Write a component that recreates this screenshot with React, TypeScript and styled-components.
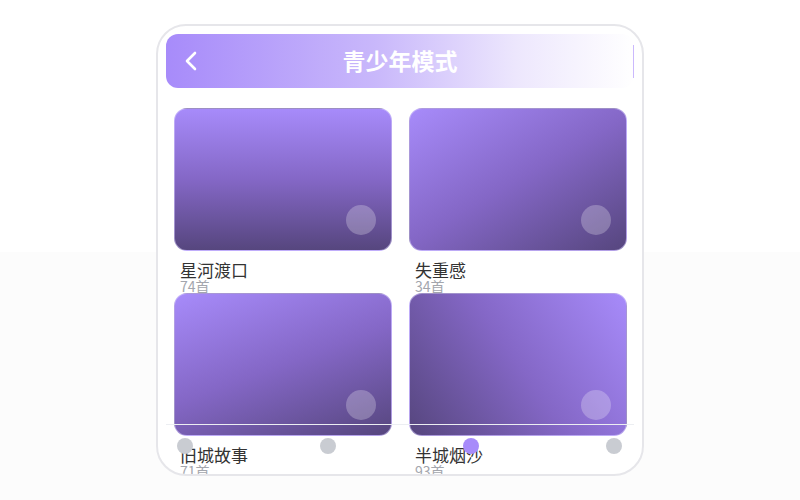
import styled, { createGlobalStyle } from 'styled-components';

const GlobalStyle = createGlobalStyle`
  html, body {
    margin: 0;
    padding: 0;
  }
  body {
    background: linear-gradient(#ffffff 0 252px, #fcfcfc 252px);
    font-family: "Noto Sans CJK SC", "Noto Sans", sans-serif;
  }
`;

const Page = styled.div`
  height: 500px;
  display: flex;
  align-items: center;
  justify-content: center;
`;

const Phone = styled.div`
  position: relative;
  width: 488px;
  height: 452px;
  box-sizing: border-box;
  padding: 8px;
  border: 2px solid #e6e6ea;
  border-radius: 30px;
  background: #fff;
  overflow: hidden;
`;

const Header = styled.header`
  position: relative;
  height: 54px;
  border-radius: 12px;
  background: linear-gradient(90deg, #a78bfa 0%, #c9b8fb 45%, #ede7fd 75%, #ffffff 100%);
  display: flex;
  align-items: center;
  justify-content: center;

  // 右侧那条细线
  &::after {
    content: '';
    position: absolute;
    right: 0;
    top: 11px;
    bottom: 10px;
    width: 1px;
    background: #cbb9fd;
  }
`;

const BackBtn = styled.button`
  position: absolute;
  left: 19px;
  top: 17px;
  padding: 0;
  border: none;
  background: none;
  display: flex;
`;

const Title = styled.h1`
  margin: 0 0 3px;
  color: #fff;
  font-size: 23px;
  line-height: 28px;
  font-weight: 700;
`;

const Grid = styled.div`
  margin: 20px 7px 0 8px;
  display: grid;
  grid-template-columns: repeat(2, 1fr);
  grid-auto-rows: 185px;
  column-gap: 17px;
`;

const Item = styled.div`
  display: flex;
  flex-direction: column;
`;

const Cover = styled.div<{ $angle: number }>`
  position: relative;
  height: 143px;
  box-sizing: border-box;
  border-radius: 13px;
  border: 1px solid rgba(214, 202, 252, 0.55);
  background: linear-gradient(${(p) => p.$angle}deg, #a78bfa 0%, #8467c6 50%, #56467e 100%);
`;

const PlayDot = styled.span`
  position: absolute;
  right: 15px;
  bottom: 15px;
  width: 30px;
  height: 30px;
  border-radius: 50%;
  background: rgba(255, 255, 255, 0.25);
`;

const Info = styled.div`
  padding: 9px 0 0 6px;
  height: 32px;
`;

const Name = styled.div`
  font-size: 17px;
  line-height: 19px;
  color: #333;
`;

const Count = styled.div`
  font-size: 14px;
  line-height: 14px;
  color: #a3a6ad;
`;

const TabBar = styled.nav`
  position: absolute;
  left: 8px;
  right: 8px;
  bottom: 0;
  height: 50px;
  box-sizing: border-box;
  border-top: 1px solid #eceef2;
  padding: 13px 12px 0 11px;
  display: flex;
  justify-content: space-between;
  align-items: flex-start;
`;

const Tab = styled.span<{ $active?: boolean }>`
  width: 16px;
  height: 16px;
  border-radius: 50%;
  background: ${(p) => (p.$active ? '#a78bfa' : '#c9ccd2')};
`;

const albums = [
  { name: '星河渡口', count: 74, angle: 180 },
  { name: '失重感', count: 34, angle: 150 },
  { name: '旧城故事', count: 71, angle: 160 },
  { name: '半城烟沙', count: 93, angle: 235 },
];

function App() {
  return (
    <Page>
      <GlobalStyle />
      <Phone>
        <Header>
          <BackBtn aria-label="返回">
            <svg width="12" height="20" viewBox="0 0 12 20" fill="none">
              <path d="M10 2 2 10l8 8" stroke="#fff" strokeWidth="2.6" strokeLinecap="round" strokeLinejoin="round" />
            </svg>
          </BackBtn>
          <Title>青少年模式</Title>
        </Header>
        <Grid>
          {albums.map((a) => (
            <Item key={a.name}>
              <Cover $angle={a.angle}>
                <PlayDot />
              </Cover>
              <Info>
                <Name>{a.name}</Name>
                <Count>{a.count}首</Count>
              </Info>
            </Item>
          ))}
        </Grid>
        <TabBar>
          <Tab />
          <Tab />
          <Tab $active />
          <Tab />
        </TabBar>
      </Phone>
    </Page>
  );
}

export default App;
